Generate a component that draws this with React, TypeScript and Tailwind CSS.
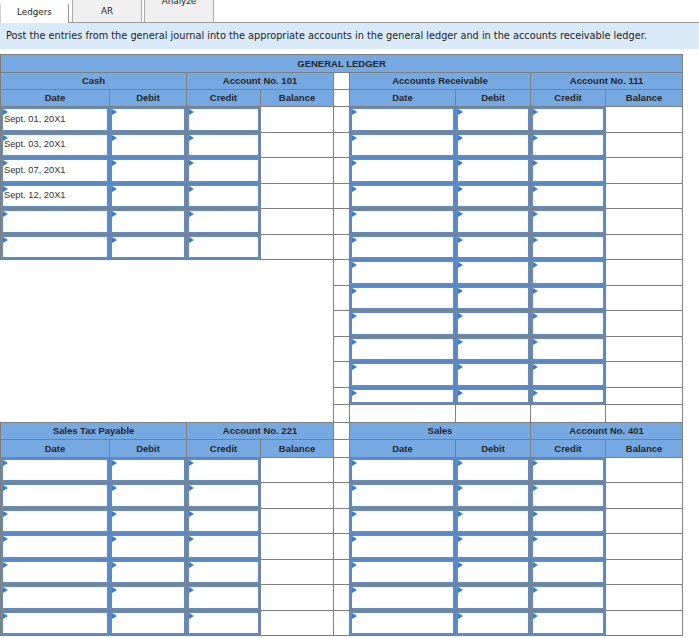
import React from "react";

type Row = { h: number; date?: string };

const line = "border border-[#7f7f7f]";
const head = "bg-[#76a9e2] text-center font-bold text-[9.5px] text-[#262626] leading-none";

// one editable cell of the ledger: blue box with the little flag in the corner
function Entry({ h, text }: { h: number; text?: string }) {
  return (
    <td className={`${line} p-0 align-top`}>
      <div
        className="relative flex items-center border-2 border-[#5b8bc9] bg-white pl-px text-[9.3px] text-[#333]"
        style={{ height: h - 1 }}
      >
        <span className="absolute left-0 top-0 h-0 w-0 border-y-[3px] border-l-[5px] border-y-transparent border-l-[#3a7bd0]" />
        {text}
      </div>
    </td>
  );
}

function Plain({ h }: { h: number }) {
  return (
    <td className={`${line} p-0`}>
      <div style={{ height: h - 1 }} />
    </td>
  );
}

function AccountHalf({ h, date }: Row) {
  return (
    <>
      <Entry h={h} text={date} />
      <Entry h={h} />
      <Entry h={h} />
      <Plain h={h} />
    </>
  );
}

function HeadRows({
  left,
  leftNo,
  right,
  rightNo,
  second = 17,
}: {
  left: string;
  leftNo: string;
  right: string;
  rightNo: string;
  second?: number;
}) {
  const cols = ["Date", "Debit", "Credit", "Balance"];
  return (
    <>
      <tr className="h-[17px]">
        <td colSpan={2} className={`${line} ${head}`}>{left}</td>
        <td colSpan={2} className={`${line} ${head}`}>{leftNo}</td>
        <td className={line} />
        <td colSpan={2} className={`${line} ${head}`}>{right}</td>
        <td colSpan={2} className={`${line} ${head}`}>{rightNo}</td>
      </tr>
      <tr style={{ height: second }}>
        {cols.map((c) => (
          <td key={"l" + c} className={`${line} ${head}`}>{c}</td>
        ))}
        <td className={line} />
        {cols.map((c) => (
          <td key={"r" + c} className={`${line} ${head}`}>{c}</td>
        ))}
      </tr>
    </>
  );
}

const topRows: Row[] = [
  { h: 26, date: "Sept. 01, 20X1" },
  { h: 25, date: "Sept. 03, 20X1" },
  { h: 26, date: "Sept. 07, 20X1" },
  { h: 25, date: "Sept. 12, 20X1" },
  { h: 26 },
  { h: 25 },
];
const arExtra = [26, 25, 26, 25, 26, 17];
const bottomRows = [25, 26, 25, 26, 25, 26, 25];

export default function App() {
  return (
    <div className="h-[638px] w-[699px] overflow-hidden bg-white font-['Liberation_Sans',Arial,sans-serif]">
      {/* tabs */}
      <div className="flex h-[23px] font-['DejaVu_Sans',Verdana,sans-serif] text-[8.75px] text-[#222]">
        <div className="mt-[4px] flex w-[69px] items-center justify-center border-x border-l-[#d0d0d0] border-r-[#999] bg-white pb-[1px]">
          Ledgers
        </div>
        <div className="w-[3px] border-b border-[#999]" />
        <div className="flex w-[70px] items-center justify-center border-x border-b border-[#aaa] border-b-[#999] bg-[#f0f0f0] pt-px">
          AR
        </div>
        <div className="w-[2px] border-b border-[#999]" />
        <div className="flex w-[70px] items-start justify-center overflow-hidden border-x border-b border-[#aaa] border-b-[#999] bg-[#f0f0f0]">
          <span className="-mt-[5px]">Analyze</span>
        </div>
        <div className="flex-1 border-b border-[#999]" />
      </div>

      <div className="flex h-[26px] items-center bg-[#dbeaf9] pl-[6px] font-['DejaVu_Sans',Verdana,sans-serif] text-[9.75px] text-[#222]">
        Post the entries from the general journal into the appropriate accounts in the general ledger and in the accounts receivable ledger.
      </div>

      <table className="mt-[5px] w-[682px] table-fixed border-collapse">
        <colgroup>
          <col className="w-[109px]" />
          <col className="w-[77px]" />
          <col className="w-[74px]" />
          <col className="w-[73px]" />
          <col className="w-[16px]" />
          <col className="w-[106px]" />
          <col className="w-[75px]" />
          <col className="w-[75px]" />
          <col className="w-[77px]" />
        </colgroup>
        <tbody>
          <tr className="h-[18px]">
            <td colSpan={9} className={`${line} ${head}`}>GENERAL LEDGER</td>
          </tr>
          <HeadRows left="Cash" leftNo="Account No. 101" right="Accounts Receivable" rightNo="Account No. 111" />

          {topRows.map((r, i) => (
            <tr key={"t" + i}>
              <AccountHalf h={r.h} date={r.date} />
              <Plain h={r.h} />
              <AccountHalf h={r.h} />
            </tr>
          ))}

          {arExtra.map((h, i) => (
            <tr key={"a" + i}>
              {i === 0 && <td colSpan={4} rowSpan={7} className="border-0 p-0" />}
              <Plain h={h} />
              <AccountHalf h={h} />
            </tr>
          ))}
          <tr>
            <Plain h={18} />
            <Plain h={18} />
            <Plain h={18} />
            <Plain h={18} />
            <Plain h={18} />
          </tr>

          <HeadRows
            left="Sales Tax Payable"
            leftNo="Account No. 221"
            right="Sales"
            rightNo="Account No. 401"
            second={18}
          />

          {bottomRows.map((h, i) => (
            <tr key={"b" + i}>
              <AccountHalf h={h} />
              <Plain h={h} />
              <AccountHalf h={h} />
            </tr>
          ))}
        </tbody>
      </table>
    </div>
  );
}
